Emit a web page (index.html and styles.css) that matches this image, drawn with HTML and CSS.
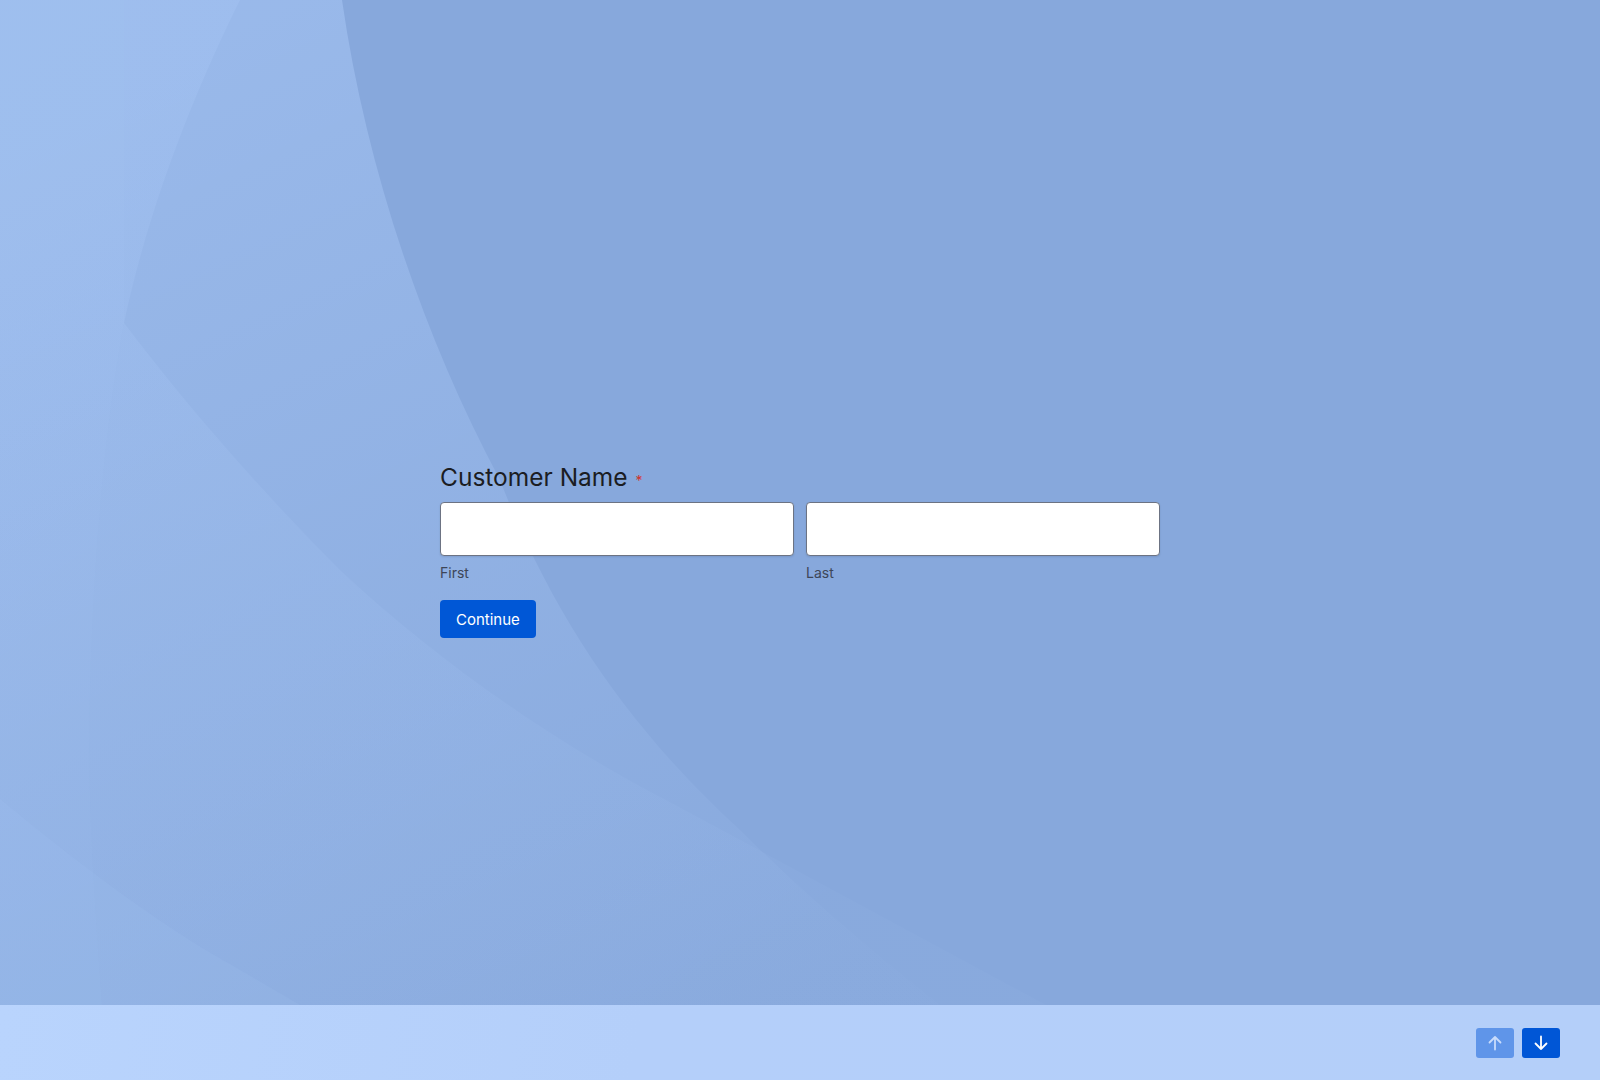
FILE: index.html
```html
<!DOCTYPE html>
<html lang="en">
<head>
<meta charset="utf-8">
<title>Customer Name</title>
<link rel="stylesheet" href="styles.css">
</head>
<body>
<div class="page">
  <main class="stage">
    <svg class="backdrop" viewBox="0 0 1600 1005" preserveAspectRatio="none" aria-hidden="true">
      <defs>
        <linearGradient id="g1" gradientUnits="userSpaceOnUse" x1="300" y1="0" x2="760" y2="1005">
          <stop offset="0" stop-color="#b4d2ff" stop-opacity="0.4"/>
          <stop offset="0.8" stop-color="#b4d2ff" stop-opacity="0.1"/>
          <stop offset="1" stop-color="#b4d2ff" stop-opacity="0.02"/>
        </linearGradient>
        <linearGradient id="g2" gradientUnits="userSpaceOnUse" x1="0" y1="0" x2="700" y2="1005">
          <stop offset="0" stop-color="#b4d2ff" stop-opacity="0.2"/>
          <stop offset="1" stop-color="#b4d2ff" stop-opacity="0.04"/>
        </linearGradient>
      </defs>
      <rect x="0" y="0" width="1600" height="1005" fill="#87a8dc"/>
      <path d="M0,0 H342 C365,160 420,330 500,480 C550,610 625,725 740,830 C800,890 870,950 940,1005 H0 Z" fill="url(#g1)"/>
      <path d="M0,0 H240 C200,80 150,200 124,323 C190,410 265,495 340,570 C430,655 550,740 666,800 L1046,1005 H0 Z" fill="url(#g2)"/>
      <path d="M0,0 H124 V323 C100,450 86,650 90,800 C92,870 98,950 102,1005 H0 Z" fill="#b4d2ff" fill-opacity="0.05"/>
      <path d="M0,799 C80,865 160,925 230,964 L300,1005 H0 Z" fill="#b4d2ff" fill-opacity="0.09"/>
    </svg>

    <form class="form">
      <div class="field">
        <div class="field-label">Customer Name<span class="req">*</span></div>
        <div class="name-row">
          <label class="name-part">
            <input class="text-input" type="text">
            <span class="sublabel">First</span>
          </label>
          <label class="name-part">
            <input class="text-input" type="text">
            <span class="sublabel">Last</span>
          </label>
        </div>
      </div>
      <div class="actions">
        <button class="btn-continue" type="button">Continue</button>
      </div>
    </form>
  </main>

  <footer class="footer">
    <button class="nav-btn nav-up" type="button" aria-label="Previous">
      <svg width="16" height="16" viewBox="0 0 16 16"><path d="M8 14.5V2 M2.5 7.5 8 2 13.5 7.5" fill="none" stroke="currentColor" stroke-width="1.8" stroke-linecap="round" stroke-linejoin="round"/></svg>
    </button>
    <button class="nav-btn nav-down" type="button" aria-label="Next">
      <svg width="16" height="16" viewBox="0 0 16 16"><path d="M8 1.5V14 M2.5 8.5 8 14 13.5 8.5" fill="none" stroke="currentColor" stroke-width="1.8" stroke-linecap="round" stroke-linejoin="round"/></svg>
    </button>
  </footer>
</div>
</body>
</html>
```

FILE: styles.css
```css
* { box-sizing: border-box; }

html, body {
  margin: 0;
  padding: 0;
  height: 100%;
  overflow: hidden;
}

body {
  font-family: Inter, "Noto Sans", "Liberation Sans", sans-serif;
  color: #1c1e23;
}

.page {
  width: 1600px;
  height: 1080px;
  display: flex;
  flex-direction: column;
}

.stage {
  position: relative;
  flex: 1;
  display: flex;
  justify-content: center;
  padding-top: 461px;
  background: #87a8dc;
  overflow: hidden;
}

.backdrop {
  position: absolute;
  inset: 0;
  width: 100%;
  height: 100%;
  display: block;
}

.form {
  position: relative;
  width: 720px;
  display: flex;
  flex-direction: column;
  margin: 0;
}

.field-label {
  font-size: 24.5px;
  line-height: 32px;
  font-weight: 400;
  color: #1b1d22;
}

.req {
  font-size: 14px;
  font-weight: 400;
  color: #d2332b;
  margin-left: 8px;
}

.name-row {
  display: flex;
  gap: 12px;
  margin-top: 5px;
}

.name-part {
  flex: 1;
  display: flex;
  flex-direction: column;
}

.text-input {
  height: 54px;
  width: 100%;
  border: 1px solid #6c7383;
  border-radius: 4px;
  background: #ffffff;
  box-shadow: 0 1px 2px rgba(20, 30, 60, 0.12);
  font: inherit;
  padding: 0 12px;
  margin: 0;
}

.sublabel {
  margin-top: 7px;
  font-size: 14px;
  line-height: 20px;
  color: #3d4658;
}

.actions {
  display: flex;
  margin-top: 17px;
}

.btn-continue {
  height: 38px;
  padding: 0 16px;
  border: 0;
  border-radius: 4px;
  background: #0057d6;
  color: #ffffff;
  font-family: Inter, "Noto Sans", "Liberation Sans", sans-serif;
  font-size: 15px;
  font-weight: 400;
  cursor: pointer;
}

.footer {
  height: 75px;
  flex: none;
  display: flex;
  align-items: center;
  justify-content: flex-end;
  gap: 8px;
  padding-right: 40px;
  background: linear-gradient(100deg, #b9d4fd 0%, #b4cffa 40%, #b4cff9 100%);
}

.nav-btn {
  width: 38px;
  height: 30px;
  border: 0;
  border-radius: 3px;
  display: flex;
  align-items: center;
  justify-content: center;
  padding: 0;
  cursor: pointer;
}

.nav-up {
  background: #5f95e9;
  color: #c8dcfc;
}

.nav-down {
  background: #0056d6;
  color: #ffffff;
}
```
